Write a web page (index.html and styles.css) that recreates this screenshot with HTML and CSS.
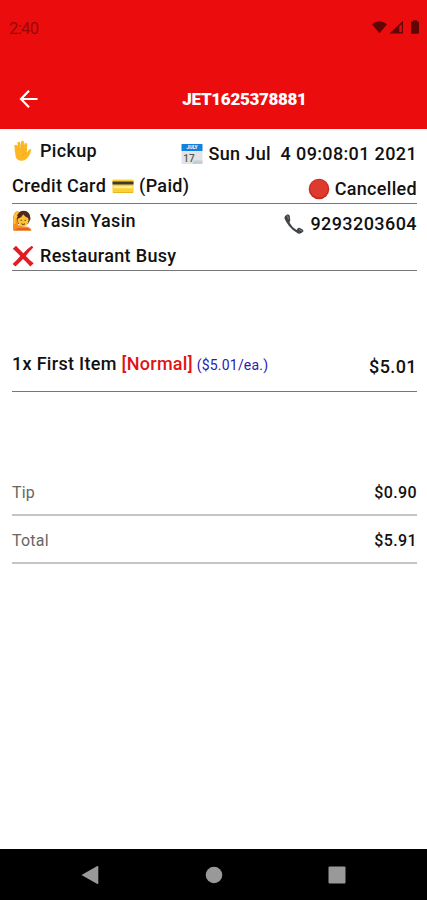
FILE: index.html
```html
<!DOCTYPE html>
<html lang="en">
<head>
<meta charset="utf-8">
<meta name="viewport" content="width=device-width, initial-scale=1">
<title>JET1625378881</title>
<link rel="stylesheet" href="styles.css">
</head>
<body>
<div class="screen">
  <header class="header">
    <div class="status">
      <span class="clock">2:40</span>
      <svg class="status-icons" width="48" height="16" viewBox="0 0 48 16">
        <path d="M0 4.200Q7.500-1.800 15 4.200L7.500 13.300Z"/>
        <path d="M17.500 13.500 31 .8V13.500ZM27.300 12.200H29.700V4L27.300 6.300Z" fill-rule="evenodd"/>
        <path d="M41 .2H45V1.500H46Q47 1.500 47 2.500V12.800Q47 13.800 46 13.800H40Q39 13.800 39 12.800V2.500Q39 1.500 40 1.500H41Z"/>
      </svg>
    </div>
    <div class="toolbar">
      <svg class="back" width="20" height="20" viewBox="0 0 20 20"><path d="M10 1.800 2 10l8 8.200M2.500 10H18.500"/></svg>
      <h1 class="title">JET1625378881</h1>
    </div>
  </header>

  <main class="content">
    <section class="block">
      <div class="col">
        <div class="line">
          <svg class="icon" width="22" height="22" viewBox="0 0 22 22">
            <path d="M4.300 11 3.800 6.200M7.300 9 6.900 3.200M10.500 9V2.200M13.500 10 13.700 4.500" fill="none" stroke="#fdb721" stroke-width="2.900" stroke-linecap="round"/>
            <path d="M2.900 9.500 15 8.500 14.800 12.800 16.800 10Q18.500 8.300 19.300 9.700 18.300 15.300 15 18.500 12 21.600 7.500 20.600 3.800 19.500 3.400 15Z" fill="#fdb721"/>
            <path d="M5.600 6V9.500M8.900 4.500V9.500M12.100 5V10M10.500 16Q11.500 13 14.800 12.800" fill="none" stroke="#f0a01a" stroke-width=".6"/>
          </svg>
          <span class="t-pickup">Pickup</span>
        </div>
        <div class="line">
          <span class="t-credit">Credit Card</span>
          <svg class="icon card" width="22" height="22" viewBox="0 0 22 22">
            <rect x=".5" y="4.500" width="21" height="13.500" rx="1" fill="#fccf35"/>
            <path d="M.5 6.500H21.500V9.500H.5Z" fill="#3c3a32"/>
            <path d="M1.500 11.200H20.500V13.300H1.500Z" fill="#fff0a0"/>
            <path d="M1 17.500H21" stroke="#e9b51e"/>
          </svg>
          <span class="t-paid">(Paid)</span>
        </div>
      </div>
      <div class="col end">
        <div class="line">
          <svg class="icon" width="22" height="22" viewBox="0 0 22 22">
            <path d="M.5 7H21.500V20Q21.500 21 20.500 21H1.500Q.5 21 .5 20Z" fill="#e1e3e5"/>
            <path d="M.5 1H21.500V8H.5Z" fill="#1681dd"/>
            <path d="M13 17.500H21.500V20Q21.500 21 20.500 21H11Z" fill="#c9cccf"/>
            <text class="cal-month" x="11" y="6.400">JULY</text>
            <text class="cal-day" x="8" y="18.800">17</text>
          </svg>
          <span class="t-date">Sun Jul&nbsp; 4 09:08:01 2021</span>
        </div>
        <div class="line">
          <svg class="icon" width="22" height="22" viewBox="0 0 22 22">
            <circle cx="11" cy="11" r="10.300" fill="#c62a20"/>
            <circle cx="11" cy="10.500" r="9" fill="#df3a2e"/>
          </svg>
          <span class="t-cancel">Cancelled</span>
        </div>
      </div>
    </section>

    <section class="block customer">
      <div class="col">
        <div class="line">
          <svg class="icon" width="22" height="22" viewBox="0 0 22 22">
            <path d="M1 20.500V7Q2 2 5.500 1L8 2.500 5 7 6 15 13 16.500Q18.500 16.500 19.500 20.500Z" fill="#f5901c"/>
            <path d="M5 8Q5 1 11.500 .8 18.500 1 18.500 9L16 14H6Z" fill="#51281b"/>
            <ellipse cx="11.200" cy="10.200" rx="5.300" ry="6.300" fill="#fcc23c"/>
            <path d="M5.700 8.500Q9.500 8 11 4.300 13.500 7.500 17.500 8.500L16 3 11.500 1 7 3Z" fill="#51281b"/>
            <path d="M9.200 9.800V11M13.200 9.800V11M9.500 13.800Q11.200 15.200 13 13.800" fill="none" stroke="#573019" stroke-width="1"/>
            <path d="M1.500 20.500 6 18H16L19.500 20.500Z" fill="#e8601d"/>
            <path d="M2.300 6 6 2.300M2.200 9 4.500 6.500M2.500 13V9" stroke="#ffc43c" stroke-width="2" stroke-linecap="round"/>
          </svg>
          <span class="t-name">Yasin Yasin</span>
        </div>
        <div class="line">
          <svg class="icon" width="22" height="22" viewBox="0 0 22 22">
            <path d="M.8 3.800 4 .8Q7.500 4.500 11.300 8.300 15 4 19.800 .8L21.300 2.400Q17 6.500 13.800 10.900 17.500 15 21.700 18.200L18.300 21.400Q14.500 17 11 14 7.500 17.500 3.500 21.600L.6 19Q5 15 8.300 11 5 7.500 .8 3.800Z" fill="#e31b23"/>
          </svg>
          <span class="t-busy">Restaurant Busy</span>
        </div>
      </div>
      <div class="col end">
        <div class="line">
          <svg class="icon" width="22" height="22" viewBox="0 0 22 22">
            <path d="M1.500 5.500Q3 9 6 13 9.500 17.500 15 20.500 18 21.500 20.500 18.300L20 16.800 16.500 14.700 15 15 13.600 17Q8.500 14 6.500 9.300L7.300 7.500 6.700 2.600 5 1.200Q1 2.500 1.500 5.500Z" fill="#404548"/>
            <path d="M4.400 2.500 5.600 6.300M15.800 16.500 19 18" stroke="#777d80" stroke-width="1"/>
          </svg>
          <span class="t-phone">9293203604</span>
        </div>
      </div>
    </section>

    <section class="item">
      <div class="item-name"><span class="t-item">1x First Item</span> <span class="t-variant">[Normal]</span> <span class="t-each">($5.01/ea.)</span></div>
      <span class="item-price">$5.01</span>
    </section>

    <section class="totals">
      <div class="total-row"><span class="label">Tip</span><span class="amount">$0.90</span></div>
      <div class="total-row"><span class="label">Total</span><span class="amount">$5.91</span></div>
    </section>
  </main>

  <nav class="navbar">
    <svg width="18" height="20" viewBox="0 0 18 20"><path d="M.5 10 16.300 1Q17.300.6 17.300 1.700V18.300Q17.300 19.400 16.300 19Z"/></svg>
    <svg width="18" height="18" viewBox="0 0 18 18"><circle cx="9" cy="9" r="8.300"/></svg>
    <svg width="18" height="18" viewBox="0 0 18 18"><rect x=".5" y=".5" width="17" height="17" rx="1"/></svg>
  </nav>
</div>
</body>
</html>
```
FILE: styles.css
```css
* { box-sizing: border-box; }

body {
  margin: 0;
  background: #fff;
  color: #111;
  font-family: Roboto, "Liberation Sans", sans-serif;
}

.screen {
  display: flex;
  flex-direction: column;
  width: 427px;
  height: 900px;
  overflow: hidden;
}

.header {
  height: 129px;
  background: #eb0d0d;
}

.status {
  display: flex;
  justify-content: space-between;
  height: 70px;
  padding: 18px 7px 0 9px;
}

.clock {
  color: #960808;
  font-size: 16.5px;
  line-height: 21px;
  letter-spacing: -.6px;
}

.status-icons {
  margin-top: 2px;
  fill: #620505;
}

.toolbar {
  display: grid;
  grid-template-columns: 61px 1fr 61px;
  align-items: center;
  height: 58px;
}

.back {
  margin-left: 19px;
  fill: none;
  stroke: #fff;
  stroke-width: 2.2;
}

.title {
  margin: 0;
  padding-left: 62px;
  color: #fff;
  font-size: 17px;
  font-weight: 900;
  line-height: 20px;
  letter-spacing: -.32px;
  text-align: center;
  white-space: nowrap;
}

.content {
  flex: 1;
  padding: 0 10px 0 12px;
}

.block {
  display: flex;
  height: 75px;
  padding-top: 4px;
  border-bottom: 1px solid #777;
}

.customer {
  height: 67px;
  padding-top: 0;
}

.col {
  display: flex;
  flex: 1;
  flex-direction: column;
  min-width: 0;
}

.line {
  display: flex;
  flex: none;
  align-items: center;
  height: 35px;
  font-size: 18px;
  font-weight: 500;
  line-height: 22px;
  letter-spacing: .32px;
  white-space: nowrap;
}

.customer .col { gap: 1px; }

.customer .line { height: 34px; }

/* Long values run leftwards past the middle of the row. */
.end {
  align-items: flex-end;
  padding-top: 3px;
}

.icon {
  flex: none;
  margin-right: 6px;
}

.end .icon { margin-right: 5px; }

.card {
  margin-right: 5px;
  margin-left: 6px;
}

.t-date { letter-spacing: .36px; }

.t-phone { letter-spacing: .43px; }

.cal-month {
  fill: #fff;
  font-size: 5px;
  font-weight: 700;
  letter-spacing: 0;
  text-anchor: middle;
}

.cal-day {
  fill: #555;
  font-size: 10px;
  letter-spacing: 0;
  text-anchor: middle;
}

.item {
  display: flex;
  align-items: center;
  justify-content: space-between;
  height: 51px;
  margin-top: 70px;
  border-bottom: 1px solid #777;
  font-size: 18px;
  font-weight: 500;
  line-height: 22px;
  letter-spacing: .3px;
  white-space: nowrap;
}

.item-name { padding-bottom: 3px; }

.item-price {
  padding-top: 2px;
  letter-spacing: .4px;
}

.t-variant { color: #e01414; }

.t-each {
  margin-left: -1px;
  color: #2a20b0;
  font-size: 14px;
  font-weight: 400;
  letter-spacing: .2px;
}

.totals { padding-top: 76px; }

.total-row {
  display: flex;
  align-items: center;
  justify-content: space-between;
  height: 48px;
  padding-top: 2px;
  border-bottom: 2px solid #c5c5c5;
}

.label {
  color: #666;
  font-size: 16px;
  letter-spacing: .2px;
}

.amount {
  font-size: 16px;
  font-weight: 500;
  letter-spacing: .4px;
}

.navbar {
  display: flex;
  align-items: center;
  justify-content: space-between;
  height: 51px;
  padding: 0 81px;
  background: #000;
  fill: #999;
}
```
